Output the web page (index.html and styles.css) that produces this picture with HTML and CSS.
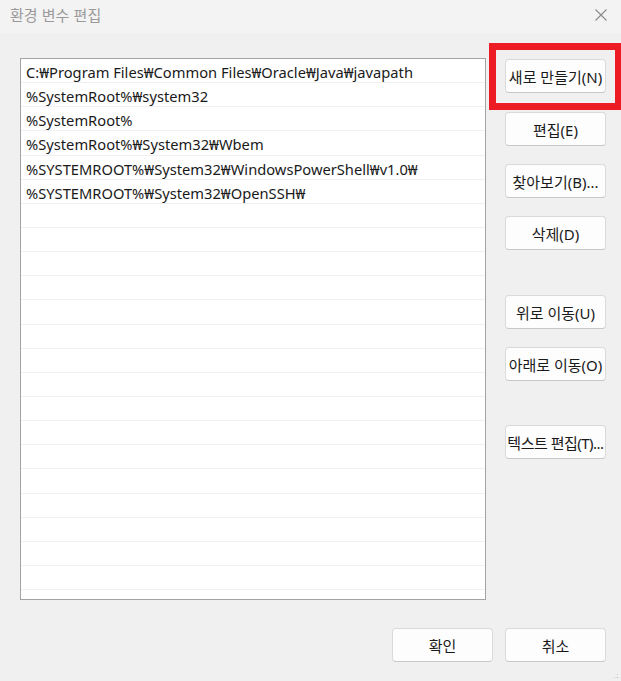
FILE: index.html
```html
<!DOCTYPE html>
<html lang="ko">
<head>
<meta charset="utf-8">
<title>환경 변수 편집</title>
<link rel="stylesheet" href="styles.css">
</head>
<body>
<div class="window">
  <div class="titlebar">
    <span class="title">환경 변수 편집</span>
    <span class="close" aria-label="닫기">
      <svg width="12" height="12" viewBox="0 0 12 12"><path d="M0.5 0.5 L11.5 11.5 M11.5 0.5 L0.5 11.5" stroke="#8a8a8a" stroke-width="1.1" fill="none"/></svg>
    </span>
  </div>
  <div class="main">
    <div class="list">
      <div class="row">C:₩Program Files₩Common Files₩Oracle₩Java₩javapath</div>
      <div class="row">%SystemRoot%₩system32</div>
      <div class="row">%SystemRoot%</div>
      <div class="row">%SystemRoot%₩System32₩Wbem</div>
      <div class="row">%SYSTEMROOT%₩System32₩WindowsPowerShell₩v1.0₩</div>
      <div class="row">%SYSTEMROOT%₩System32₩OpenSSH₩</div>
      <div class="row"></div><div class="row"></div><div class="row"></div><div class="row"></div>
      <div class="row"></div><div class="row"></div><div class="row"></div><div class="row"></div>
      <div class="row"></div><div class="row"></div><div class="row"></div><div class="row"></div>
      <div class="row"></div><div class="row"></div><div class="row"></div><div class="row"></div>
      <div class="row"></div>
    </div>
    <div class="actions">
      <button class="btn first">새로 만들기(N)</button>
      <button class="btn">편집(E)</button>
      <button class="btn">찾아보기(B)...</button>
      <button class="btn">삭제(D)</button>
      <button class="btn sep1">위로 이동(U)</button>
      <button class="btn">아래로 이동(O)</button>
      <button class="btn sep2 tight">텍스트 편집(T)...</button>
    </div>
  </div>
  <div class="footer">
    <button class="btn">확인</button>
    <button class="btn">취소</button>
  </div>
  <div class="highlight"></div>
  <div class="grip"></div>
</div>
</body>
</html>
```
FILE: styles.css
```css
* { box-sizing: border-box; }
html, body { margin: 0; padding: 0; }
body {
  width: 621px;
  height: 681px;
  overflow: hidden;
  font-family: "Noto Sans", "Noto Sans CJK KR", sans-serif;
  color: #1a1a1a;
}
.window {
  position: relative;
  width: 621px;
  height: 681px;
  background: #f0f0f0;
  display: flex;
  flex-direction: column;
}
.titlebar {
  height: 33px;
  background: #f3f3f3;
  display: flex;
  align-items: center;
  justify-content: space-between;
  padding: 0 14px 4px 10px;
}
.title {
  font-family: "Noto Sans CJK KR", sans-serif;
  font-size: 15px;
  color: #9a9a9a;
}
.close { display: flex; }
.main {
  display: flex;
  padding: 25px 0 0 20px;
}
.list {
  width: 466px;
  height: 542px;
  background: #fff;
  border: 1px solid #a3a3a3;
  overflow: hidden;
}
.row {
  height: 24.15px;
  border-bottom: 1px solid #f0f0f0;
  padding: 2px 0 0 5px;
  font-size: 14.7px;
  line-height: 22px;
  white-space: nowrap;
}
.actions {
  display: flex;
  flex-direction: column;
  gap: 18px;
  margin: 1px 0 0 19px;
}
.btn {
  width: 101px;
  height: 34px;
  padding: 0;
  background: #fdfdfd;
  border: 1px solid #dadada;
  border-bottom-color: #c8c8c8;
  border-radius: 4px;
  font-family: "Noto Sans", "Noto Sans CJK KR", sans-serif;
  font-size: 15px;
  color: #1a1a1a;
  white-space: nowrap;
  overflow: visible;
}
.tight { letter-spacing: -0.5px; }
.first { margin-bottom: 1px; }
.sep1 { margin-top: 27px; }
.sep2 { margin-top: 26px; }
.footer {
  margin-top: auto;
  display: flex;
  justify-content: flex-end;
  gap: 12px;
  padding: 0 15px 19px 0;
}
.highlight {
  position: absolute;
  left: 489px;
  top: 43px;
  width: 132px;
  height: 67px;
  border: 7px solid #ed1c24;
  border-right-width: 6px;
}
.grip {
  position: absolute;
  right: 2px;
  bottom: 2px;
  width: 6px;
  height: 6px;
  background:
    radial-gradient(circle, #b0b0b0 0.8px, transparent 1px) 0 0 / 3px 3px;
  clip-path: polygon(100% 0, 100% 100%, 0 100%);
}
```
